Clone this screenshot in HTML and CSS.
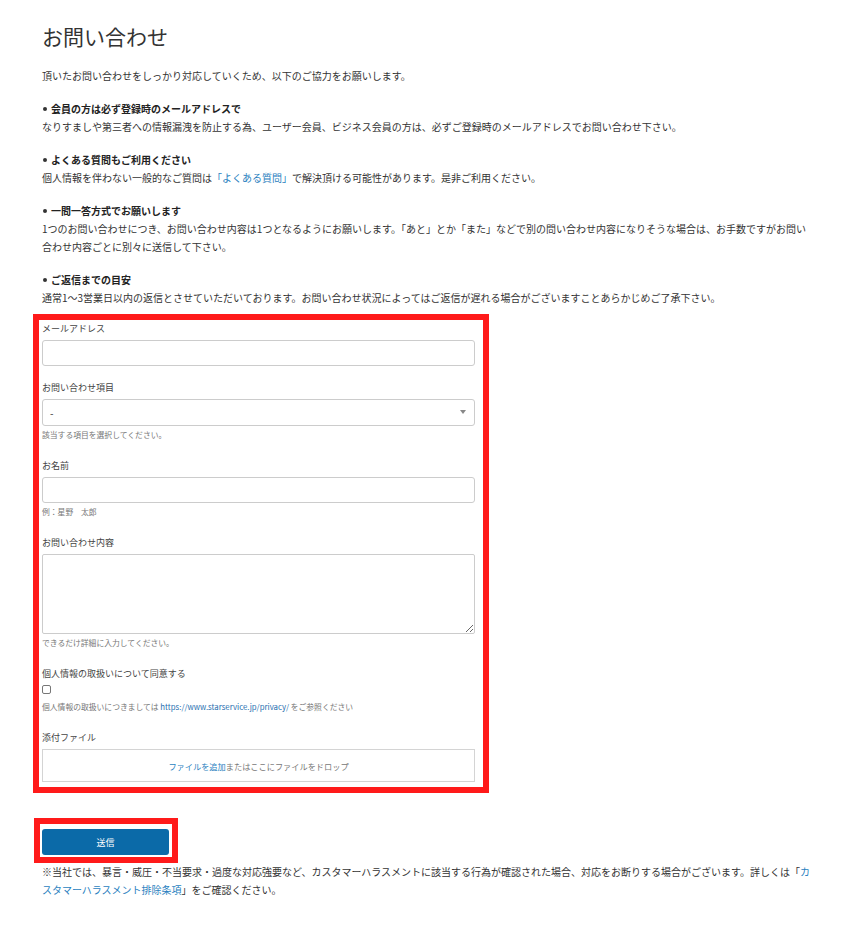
FILE: index.html
```html
<!DOCTYPE html>
<html lang="ja">
<head>
<meta charset="utf-8">
<title>お問い合わせ</title>
<link rel="stylesheet" href="styles.css">
</head>
<body>
<main class="page">
  <h1 class="title">お問い合わせ</h1>
  <p class="intro">頂いたお問い合わせをしっかり対応していくため、以下のご協力をお願いします。</p>

  <section class="note">
    <h2 class="note-head">会員の方は必ず登録時のメールアドレスで</h2>
    <p>なりすましや第三者への情報漏洩を防止する為、ユーザー会員、ビジネス会員の方は、必ずご登録時のメールアドレスでお問い合わせ下さい。</p>
  </section>
  <section class="note">
    <h2 class="note-head">よくある質問もご利用ください</h2>
    <p>個人情報を伴わない一般的なご質問は<a href="#" class="link">「よくある質問」</a>で解決頂ける可能性があります。是非ご利用ください。</p>
  </section>
  <section class="note">
    <h2 class="note-head">一問一答方式でお願いします</h2>
    <p>1つのお問い合わせにつき、お問い合わせ内容は1つとなるようにお願いします。「あと」とか「また」などで別の問い合わせ内容になりそうな場合は、お手数ですがお問い合わせ内容ごとに別々に送信して下さい。</p>
  </section>
  <section class="note last">
    <h2 class="note-head">ご返信までの目安</h2>
    <p>通常1〜3営業日以内の返信とさせていただいております。お問い合わせ状況によってはご返信が遅れる場合がございますことあらかじめご了承下さい。</p>
  </section>

  <form class="form-box">
    <div class="field">
      <label class="label">メールアドレス</label>
      <input class="input" type="text">
    </div>
    <div class="field">
      <label class="label">お問い合わせ項目</label>
      <div class="select">
        <span class="select-value">-</span>
        <span class="select-arrow"></span>
      </div>
      <p class="help">該当する項目を選択してください。</p>
    </div>
    <div class="field">
      <label class="label">お名前</label>
      <input class="input" type="text">
      <p class="help">例：星野　太郎</p>
    </div>
    <div class="field">
      <label class="label">お問い合わせ内容</label>
      <textarea class="textarea"></textarea>
      <p class="help">できるだけ詳細に入力してください。</p>
    </div>
    <div class="field">
      <label class="label">個人情報の取扱いについて同意する</label>
      <span class="checkbox"></span>
      <p class="help">個人情報の取扱いにつきましては <a href="#" class="link-sm">https://www.starservice.jp/privacy/</a> をご参照ください</p>
    </div>
    <div class="field">
      <label class="label">添付ファイル</label>
      <div class="dropzone"><a href="#" class="link-drop">ファイルを追加</a>またはここにファイルをドロップ</div>
    </div>
  </form>

  <div class="submit-box">
    <button type="button" class="submit">送信</button>
  </div>

  <p class="footer-note">※当社では、暴言・威圧・不当要求・過度な対応強要など、カスタマーハラスメントに該当する行為が確認された場合、対応をお断りする場合がございます。詳しくは「<a href="#" class="link">カ</a><br><a href="#" class="link">スタマーハラスメント排除条項</a>」をご確認ください。</p>
</main>
</body>
</html>
```

FILE: styles.css
```css
html, body {
  margin: 0;
  padding: 0;
  background: #fff;
}
body {
  font-family: "Noto Sans CJK JP", "Noto Sans", sans-serif;
  color: #333;
}
.page {
  width: 772px;
  padding: 20px 0 30px 42px;
}
.title {
  margin: 0 0 15px;
  font-size: 21px;
  font-weight: 400;
  line-height: 32px;
  color: #333;
}
.intro {
  margin: 0 0 15px;
  font-size: 10px;
  line-height: 18px;
}
.note {
  margin-bottom: 15px;
}
.note.last {
  margin-bottom: 7px;
}
.note-head {
  display: flex;
  align-items: center;
  gap: 4px;
  margin: 0;
  font-size: 10px;
  line-height: 18px;
  font-weight: 700;
  color: #222;
}
.note-head::before {
  content: "";
  width: 4px;
  height: 4px;
  margin-left: 1px;
  border-radius: 50%;
  background: #333;
}
.note p {
  margin: 0;
  font-size: 10px;
  line-height: 18px;
}
.link {
  color: #2a7fc0;
  text-decoration: none;
}
.form-box {
  width: 433px;
  margin-left: -9px;
  border: 6px solid #ff1a1a;
  padding: 2px 8px 5px 3px;
  display: flex;
  flex-direction: column;
  gap: 15px;
}
.field {
  display: flex;
  flex-direction: column;
}
.label {
  font-size: 9px;
  line-height: 14px;
  margin-bottom: 4px;
  color: #444;
}
.input {
  box-sizing: border-box;
  height: 26px;
  width: 100%;
  margin: 0;
  border: 1px solid #ccc;
  border-radius: 3px;
  background: #fff;
}
.select {
  box-sizing: border-box;
  height: 27px;
  border: 1px solid #ccc;
  border-radius: 3px;
  display: flex;
  align-items: center;
  justify-content: space-between;
  padding: 0 8px 0 7px;
}
.select-value {
  font-size: 10px;
  color: #333;
}
.select-arrow {
  width: 0;
  height: 0;
  border-left: 3px solid transparent;
  border-right: 3px solid transparent;
  border-top: 4px solid #888;
  margin-top: -2px;
}
.help {
  margin: 3px 0 0;
  font-size: 7.8px;
  line-height: 12px;
  color: #777;
}
.field:has(.help) + .field {
  margin-top: 3px;
}
.textarea {
  box-sizing: border-box;
  height: 80px;
  width: 100%;
  margin: 0;
  border: 1px solid #ccc;
  border-radius: 2px;
  resize: vertical;
}
.checkbox {
  box-sizing: border-box;
  width: 9px;
  height: 9px;
  border: 1px solid #777;
  border-radius: 2px;
  margin: 0 0 4px;
}
.link-sm {
  color: #1f6fb0;
  text-decoration: none;
}
.dropzone {
  box-sizing: border-box;
  height: 33px;
  border: 1px solid #d4d4d4;
  display: flex;
  align-items: center;
  justify-content: center;
  font-size: 8.2px;
  color: #777;
}
.link-drop {
  color: #2a7fc0;
  text-decoration: none;
}
.submit-box {
  width: 127px;
  margin: 25px 0 0 -8px;
  border: 6px solid #ff1a1a;
  padding: 5px 3px 2px 2px;
}
.submit {
  display: block;
  width: 127px;
  height: 26px;
  border: none;
  border-radius: 3px;
  background: #0b6aa8;
  color: #fff;
  font-family: "Noto Sans CJK JP", sans-serif;
  font-size: 9px;
  padding: 0;
}
.footer-note {
  margin: 0;
  font-size: 10px;
  line-height: 18px;
}
```
